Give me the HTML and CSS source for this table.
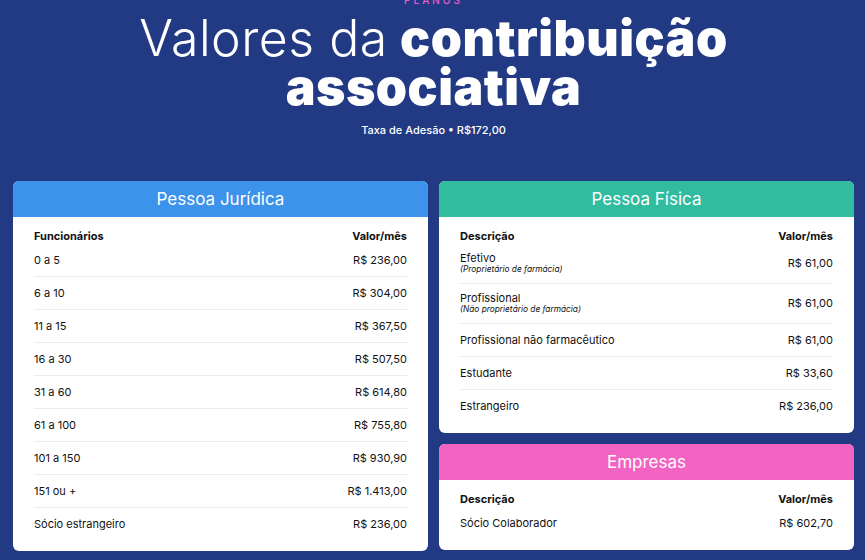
FILE: index.html
```html
<!DOCTYPE html>
<html lang="pt-BR">
<head>
<meta charset="utf-8">
<title>Planos</title>
<link rel="stylesheet" href="styles.css">
</head>
<body>
<section class="planos">
  <header class="hero">
    <div class="eyebrow">PLANOS</div>
    <h1 class="title"><span class="light">Valores da</span> <strong>contribuição associativa</strong></h1>
    <p class="fee">Taxa de Adesão • R$172,00</p>
  </header>

  <div class="grid">
    <div class="col">
      <div class="card">
        <div class="card-head blue">Pessoa Jurídica</div>
        <div class="card-body">
          <div class="row head"><span>Funcionários</span><span>Valor/mês</span></div>
          <div class="row"><span>0 a 5</span><span>R$ 236,00</span></div>
          <div class="row"><span>6 a 10</span><span>R$ 304,00</span></div>
          <div class="row"><span>11 a 15</span><span>R$ 367,50</span></div>
          <div class="row"><span>16 a 30</span><span>R$ 507,50</span></div>
          <div class="row"><span>31 a 60</span><span>R$ 614,80</span></div>
          <div class="row"><span>61 a 100</span><span>R$ 755,80</span></div>
          <div class="row"><span>101 a 150</span><span>R$ 930,90</span></div>
          <div class="row"><span>151 ou +</span><span>R$ 1.413,00</span></div>
          <div class="row"><span>Sócio estrangeiro</span><span>R$ 236,00</span></div>
        </div>
      </div>
    </div>

    <div class="col">
      <div class="card">
        <div class="card-head teal">Pessoa Física</div>
        <div class="card-body">
          <div class="row head"><span>Descrição</span><span>Valor/mês</span></div>
          <div class="row double"><span class="desc"><span class="main">Efetivo</span><em class="sub">(Proprietário de farmácia)</em></span><span>R$ 61,00</span></div>
          <div class="row double"><span class="desc"><span class="main">Profissional</span><em class="sub">(Não proprietário de farmácia)</em></span><span>R$ 61,00</span></div>
          <div class="row"><span>Profissional não farmacêutico</span><span>R$ 61,00</span></div>
          <div class="row"><span>Estudante</span><span>R$ 33,60</span></div>
          <div class="row"><span>Estrangeiro</span><span>R$ 236,00</span></div>
        </div>
      </div>

      <div class="card">
        <div class="card-head pink">Empresas</div>
        <div class="card-body">
          <div class="row head"><span>Descrição</span><span>Valor/mês</span></div>
          <div class="row"><span>Sócio Colaborador</span><span>R$ 602,70</span></div>
        </div>
      </div>
    </div>
  </div>
</section>
</body>
</html>
```

FILE: styles.css
```css
* { box-sizing: border-box; }

html, body {
  margin: 0;
  padding: 0;
}

body {
  background: #223a84;
  font-family: Inter, "Noto Sans", sans-serif;
  color: #111;
  height: 560px;
  overflow: hidden;
}

.planos {
  padding: 0 11px 0 13px;
}

.hero {
  text-align: center;
  color: #fff;
  margin-top: -6px;
}

.eyebrow {
  color: #ea5ec8;
  font-size: 10px;
  line-height: 12px;
  letter-spacing: 3px;
  font-weight: 500;
}

.title {
  margin: 8px auto 0;
  max-width: 640px;
  font-size: 50px;
  line-height: 49px;
  font-weight: 700;
  letter-spacing: 0.5px;
}

.title .light {
  font-weight: 300;
}

.fee {
  margin: 11px 0 0;
  font-size: 11px;
  line-height: 14px;
  font-weight: 500;
}

.grid {
  margin-top: 44px;
  display: grid;
  grid-template-columns: 1fr 1fr;
  column-gap: 11px;
  align-items: start;
}

.col {
  display: flex;
  flex-direction: column;
  gap: 11px;
}

.card {
  background: #fff;
  border-radius: 6px;
  overflow: hidden;
}

.card-head {
  height: 36px;
  display: flex;
  align-items: center;
  justify-content: center;
  color: #fff;
  font-size: 17px;
  font-weight: 400;
}

.blue { background: #3d93eb; }
.teal { background: #31bc9f; }
.pink { background: #f263c4; }

.card-body {
  padding: 13px 21px 11px;
}

.row {
  display: flex;
  justify-content: space-between;
  align-items: center;
  font-size: 11px;
  line-height: 12px;
  padding: 10px 0;
  border-bottom: 1px solid #ececec;
}

.row:last-child {
  border-bottom: none;
}

.row.head {
  font-weight: 700;
  padding: 0 0 2px;
  border-bottom: none;
}

.row.double {
  padding: 8px 0 9px;
}

.desc {
  display: flex;
  flex-direction: column;
}

.desc .main {
  line-height: 12px;
}

.desc .sub {
  font-size: 8.3px;
  line-height: 10px;
  font-style: italic;
}
```
